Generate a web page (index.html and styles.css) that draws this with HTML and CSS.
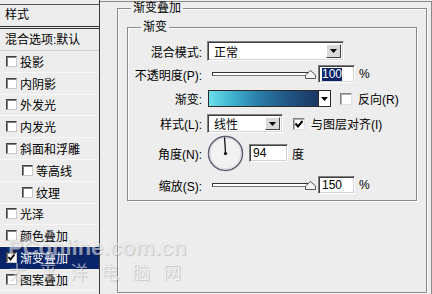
FILE: index.html
```html
<!DOCTYPE html>
<html>
<head>
    <meta charset="UTF-8">
    <title>图层样式 - 渐变叠加</title>
    <link rel="stylesheet" href="styles.css">
</head>
<body>
    <div class="dialog">
        <div class="style-list">
            <div class="list-head">样式</div>
            <div class="list-blend">混合选项:默认</div>
            <div class="list-item"><span class="check"></span>投影</div>
            <div class="list-item"><span class="check"></span>内阴影</div>
            <div class="list-item"><span class="check"></span>外发光</div>
            <div class="list-item"><span class="check"></span>内发光</div>
            <div class="list-item"><span class="check"></span>斜面和浮雕</div>
            <div class="list-item sub"><span class="check"></span>等高线</div>
            <div class="list-item sub"><span class="check"></span>纹理</div>
            <div class="list-item"><span class="check"></span>光泽</div>
            <div class="list-item"><span class="check"></span>颜色叠加</div>
            <div class="list-item selected">
                <span class="check"><svg width="9" height="9" viewBox="0 0 9 9"><polyline points="1.5,4 3.5,6.5 7.5,1.5" fill="none" stroke="#000" stroke-width="1.8"/></svg></span>渐变叠加
            </div>
            <div class="list-item"><span class="check"></span>图案叠加</div>
        </div>

        <div class="main">
            <fieldset class="group outer">
                <legend>渐变叠加</legend>
                <fieldset class="group inner">
                    <legend>渐变</legend>

                    <div class="row row-blend">
                        <span class="label">混合模式:</span>
                        <div class="select select-blend">
                            <span class="select-text">正常</span>
                            <span class="drop-btn"><svg width="7" height="4" viewBox="0 0 7 4"><polygon points="0,0 7,0 3.5,4" fill="#000"/></svg></span>
                        </div>
                    </div>

                    <div class="row row-opacity">
                        <span class="label">不透明度(P):</span>
                        <div class="slider">
                            <span class="track"></span>
                            <svg class="thumb" width="11" height="9" viewBox="0 0 11 9"><polygon points="0.5,8.5 0.5,5 5.5,0.5 10.5,5 10.5,8.5" fill="#f4f4f4" stroke="#555"/></svg>
                        </div>
                        <div class="field field-num"><span class="sel-text">100</span></div>
                        <span class="unit">%</span>
                    </div>

                    <div class="row row-gradient">
                        <span class="label">渐变:</span>
                        <div class="gradient-box">
                            <span class="gradient"></span>
                            <span class="gradient-drop"><svg width="7" height="4" viewBox="0 0 7 4"><polygon points="0,0 7,0 3.5,4" fill="#000"/></svg></span>
                        </div>
                        <span class="box"></span>
                        <span class="box-label">反向(R)</span>
                    </div>

                    <div class="row row-style">
                        <span class="label">样式(L):</span>
                        <div class="select select-style">
                            <span class="select-text">线性</span>
                            <span class="drop-btn"><svg width="7" height="4" viewBox="0 0 7 4"><polygon points="0,0 7,0 3.5,4" fill="#000"/></svg></span>
                        </div>
                        <span class="box box-on"><svg width="10" height="10" viewBox="0 0 10 10"><polyline points="1.5,4.5 4,7.5 8.5,2" fill="none" stroke="#000" stroke-width="2"/></svg></span>
                        <span class="box-label">与图层对齐(I)</span>
                    </div>

                    <div class="row row-angle">
                        <span class="label">角度(N):</span>
                        <svg class="dial" width="37" height="37" viewBox="0 0 37 37">
                            <circle cx="18.5" cy="18.5" r="17" fill="#f2f2f2" stroke="#5d6270" stroke-width="1.5"/>
                            <circle cx="18.5" cy="18.5" r="15.5" fill="none" stroke="#d8d8d8" stroke-width="1"/>
                            <line x1="18.5" y1="18.5" x2="17.6" y2="2.5" stroke="#000" stroke-width="1.2"/>
                            <circle cx="18.5" cy="18.5" r="1.6" fill="#000"/>
                        </svg>
                        <div class="field field-angle">94</div>
                        <span class="unit">度</span>
                    </div>

                    <div class="row row-scale">
                        <span class="label">缩放(S):</span>
                        <div class="slider">
                            <span class="track"></span>
                            <svg class="thumb" width="11" height="9" viewBox="0 0 11 9"><polygon points="0.5,8.5 0.5,5 5.5,0.5 10.5,5 10.5,8.5" fill="#f4f4f4" stroke="#555"/></svg>
                        </div>
                        <div class="field field-num">150</div>
                        <span class="unit">%</span>
                    </div>
                </fieldset>
            </fieldset>
        </div>
    </div>

    <div class="watermark">
        <div class="wm-site">PConline.com.cn</div>
        <div class="wm-name">太平洋电脑网</div>
    </div>
</body>
</html>
```

FILE: styles.css
```css
:root {
    --face: #ededed;
    --line: #8a8a8a;
    --dark: #404040;
    --shadow: #808080;
    --highlight: #0a246a;
}

* {
    margin: 0;
    padding: 0;
    box-sizing: border-box;
}

body {
    width: 432px;
    height: 294px;
    overflow: hidden;
    background-color: var(--face);
    font-family: "Liberation Sans", "Noto Sans CJK SC", sans-serif;
    font-size: 12px;
    color: #000;
    position: relative;
}

.dialog {
    display: flex;
    height: 294px;
}

/* left style list */
.style-list {
    width: 100px;
    border-right: 1px solid #3a3a3a;
    display: flex;
    flex-direction: column;
}

.list-head {
    margin-top: 4px;
    border-top: 1px solid #555;
    border-bottom: 3px double #333;
    height: 25px;
    line-height: 21px;
    padding-left: 5px;
}

.list-blend {
    height: 22px;
    line-height: 22px;
    padding-left: 5px;
    border-bottom: 1px solid #d0d0d0;
}

.list-item {
    height: 21.8px;
    display: flex;
    align-items: center;
    padding-left: 6px;
    border-bottom: 1px solid #f7f7f7;
}

.list-item.sub {
    padding-left: 22px;
}

.list-item.selected {
    background-color: var(--highlight);
    color: #fff;
    border-bottom-color: var(--highlight);
}

.check {
    width: 11px;
    height: 11px;
    margin-right: 3px;
    background-color: #fff;
    border: 1px solid;
    border-color: var(--dark) #c8c8c8 #c8c8c8 var(--dark);
    box-shadow: inset 1px 1px 0 var(--shadow);
    display: flex;
    align-items: center;
    justify-content: center;
}

/* right panel */
.main {
    flex: 1;
    margin-top: 1px;
    border-top: 1px solid var(--line);
    border-right: 1px solid var(--line);
    display: flex;
    flex-direction: column;
}

.group {
    border: 1px solid var(--line);
    box-shadow: inset 1px 1px 0 #fafafa, 1px 1px 0 #fafafa;
    min-inline-size: auto;
}

.group legend {
    margin-left: 13px;
    padding: 0 2px;
    line-height: 12px;
    height: 12px;
}

.outer {
    flex: 1;
    margin: 0 4px 1px 17px;
}

.inner {
    margin: 7px 9px 0 9px;
    padding: 8px 0 6px 0;
}

.row {
    display: flex;
    align-items: center;
}

.row-blend { height: 20px; }
.row-opacity { height: 18px; margin-top: 4px; }
.row-gradient { height: 17px; margin-top: 7px; }
.row-style { height: 19px; margin-top: 7px; }
.row-angle { height: 36px; margin-top: 2px; }
.row-scale { height: 18px; margin-top: 5px; }

.label {
    width: 74px;
    text-align: right;
    margin-right: 5px;
    white-space: nowrap;
}

.select {
    height: 100%;
    display: flex;
    align-items: stretch;
    background-color: #fff;
    border: 1px solid;
    border-color: var(--shadow) #fff #fff var(--shadow);
    box-shadow: inset 1px 1px 0 var(--dark), inset -1px -1px 0 #d4d4d4;
    padding: 2px;
}

.select-blend { width: 137px; }
.select-style { width: 76px; }

.select-text {
    flex: 1;
    padding-left: 4px;
    display: flex;
    align-items: center;
}

.drop-btn {
    width: 15px;
    background-color: #d9d9d9;
    border: 1px solid;
    border-color: #fff var(--dark) var(--dark) #fff;
    display: flex;
    align-items: center;
    justify-content: center;
}

.slider {
    width: 104px;
    height: 18px;
    margin-left: 5px;
    position: relative;
    display: flex;
    align-items: center;
}

.track {
    width: 99px;
    height: 4px;
    background-color: #fff;
    border: 1px solid;
    border-color: #333 #888 #777 #333;
}

.thumb {
    position: absolute;
    left: 93px;
    top: 5px;
}

.field {
    height: 100%;
    background-color: #fff;
    border: 1px solid;
    border-color: var(--shadow) #fff #fff var(--shadow);
    box-shadow: inset 1px 1px 0 var(--dark), inset -1px -1px 0 #d4d4d4;
    padding-left: 3px;
    display: flex;
    align-items: center;
}

.field-num {
    width: 37px;
    margin-left: 2px;
}

.field-angle {
    width: 39px;
    height: 18px;
    margin-left: 5px;
}

.sel-text {
    background-color: var(--highlight);
    color: #fff;
    line-height: 13px;
}

.unit {
    margin-left: 4px;
}

.gradient-box {
    width: 123px;
    height: 17px;
    margin-left: 1px;
    display: flex;
    border: 1px solid #2a2a2a;
    background-color: #fff;
}

.gradient {
    flex: 1;
    background: linear-gradient(to right, #6be0ea 0%, #3fb0cf 22%, #2a7ea8 45%, #215886 70%, #1b3764 100%);
}

.gradient-drop {
    width: 12px;
    border-left: 1px solid #2a2a2a;
    display: flex;
    align-items: center;
    justify-content: center;
}

.box {
    width: 12px;
    height: 12px;
    margin-left: 9px;
    margin-right: 6px;
    background-color: #fff;
    border: 1px solid;
    border-color: var(--shadow) #e0e0e0 #e0e0e0 var(--shadow);
    box-shadow: inset 1px 1px 0 #b0b0b0;
    display: flex;
    align-items: center;
    justify-content: center;
}

.box-on {
    margin-left: 10px;
}

.dial {
    margin-left: 0;
    flex: none;
}

/* site watermark over the screenshot */
.watermark {
    position: absolute;
    left: 8px;
    top: 236px;
    pointer-events: none;
    color: rgba(255, 255, 255, 0.55);
    text-shadow: 1px 1px 1px rgba(0, 0, 0, 0.16), -1px -1px 0 rgba(0, 0, 0, 0.05);
}

.wm-site {
    font-family: "Liberation Sans", sans-serif;
    font-weight: bold;
    font-size: 22px;
    line-height: 24px;
}

.wm-name {
    font-family: "Noto Sans CJK SC", sans-serif;
    font-size: 18px;
    line-height: 22px;
    letter-spacing: 13px;
}
```
